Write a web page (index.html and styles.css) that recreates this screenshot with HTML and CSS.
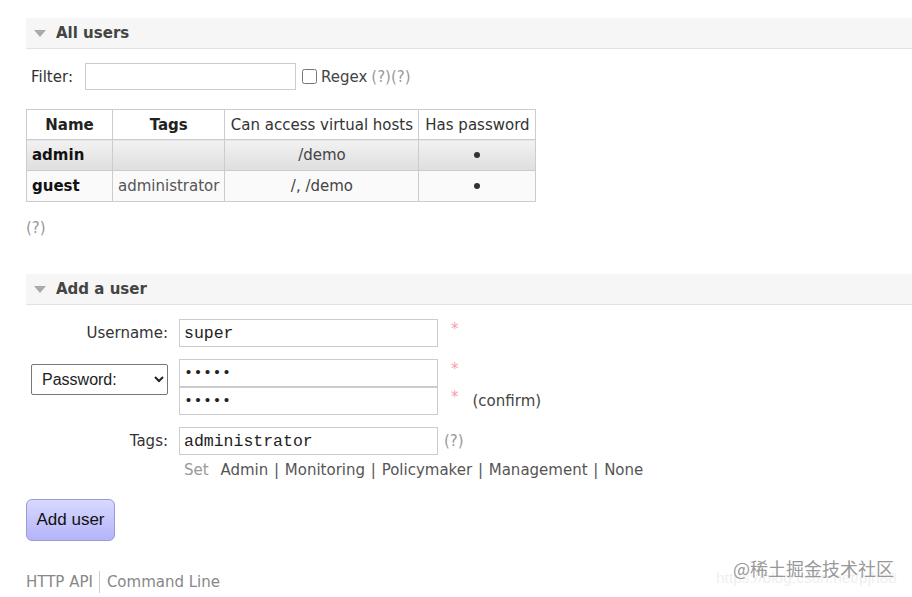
FILE: index.html
```html
<html lang="en">
<head>
    <meta charset="UTF-8">
    <title>Users</title>
    <link rel="stylesheet" href="styles.css">
</head>
<body>
    <div class="main-container">
        <div class="section">
            <h2 class="section-title"><span class="arrow"></span>All users</h2>
            <div class="filter-row">
                <label class="filter-label">Filter:</label>
                <input type="text" class="filter-input">
                <label class="regex-label"><input type="checkbox" class="regex-box">Regex</label>
                <span class="help">(?)(?)</span>
            </div>
            <table class="users-table">
                <thead>
                    <tr>
                        <th class="col-name">Name</th>
                        <th class="col-tags">Tags</th>
                        <th class="col-vhosts plain">Can access virtual hosts</th>
                        <th class="col-pass plain">Has password</th>
                    </tr>
                </thead>
                <tbody>
                    <tr class="row-alt">
                        <td class="user-name">admin</td>
                        <td></td>
                        <td class="center">/demo</td>
                        <td class="center"><span class="dot"></span></td>
                    </tr>
                    <tr class="row-plain">
                        <td class="user-name">guest</td>
                        <td class="tags-cell">administrator</td>
                        <td class="center">/, /demo</td>
                        <td class="center"><span class="dot"></span></td>
                    </tr>
                </tbody>
            </table>
            <p class="help table-help">(?)</p>
        </div>

        <div class="section">
            <h2 class="section-title"><span class="arrow"></span>Add a user</h2>
            <div class="user-form">
                <div class="form-row">
                    <label class="form-label">Username:</label>
                    <input type="text" class="text-input" value="super">
                    <span class="mand">*</span>
                </div>
                <div class="form-row top">
                    <div class="form-label">
                        <select class="pass-select">
                            <option>Password:</option>
                        </select>
                    </div>
                    <div class="pass-stack">
                        <div class="pass-line">
                            <input type="password" class="text-input" value="super">
                            <span class="mand">*</span>
                        </div>
                        <div class="pass-line">
                            <input type="password" class="text-input" value="super">
                            <span class="mand">*</span>
                            <span class="confirm">(confirm)</span>
                        </div>
                    </div>
                </div>
                <div class="form-row">
                    <label class="form-label">Tags:</label>
                    <input type="text" class="text-input" value="administrator">
                    <span class="help tags-help">(?)</span>
                </div>
                <div class="form-row set-row">
                    <span class="form-label"></span>
                    <div class="tag-links">
                        <span class="set">Set</span>
                        <span>Admin</span> | <span>Monitoring</span> | <span>Policymaker</span> | <span>Management</span> | <span>None</span>
                    </div>
                </div>
            </div>
            <button type="button" class="add-button">Add user</button>
        </div>

        <div class="footer">
            <span class="footer-link">HTTP API</span>
            <span class="footer-link last">Command Line</span>
        </div>
    </div>

    <div class="watermark">
        <span class="wm-url">https://blog.csdn.net/pjh88</span>
        <span class="wm-text">@稀土掘金技术社区</span>
    </div>
</body>
</html>
```

FILE: styles.css
```css
html {
    background-color: white;
}

body {
    margin: 0;
    font-family: "DejaVu Sans", Verdana, sans-serif;
    font-size: 15px;
    color: #444;
    overflow: hidden;
}

.main-container {
    padding: 18px 0 0 26px;
}

.section-title {
    display: flex;
    align-items: center;
    height: 30px;
    margin: 0;
    padding-left: 8px;
    background-color: #f6f6f6;
    border-bottom: 1px solid #e2e2e2;
    font-size: 15px;
    font-weight: bold;
    color: #444;
}

.arrow {
    width: 0;
    height: 0;
    margin-right: 10px;
    border-left: 6px solid transparent;
    border-right: 6px solid transparent;
    border-top: 7px solid #aaa;
}

.filter-row {
    display: flex;
    align-items: center;
    margin-top: 14px;
    height: 27px;
}

.filter-label {
    margin-left: 5px;
    margin-right: 12px;
    color: #333;
}

.filter-input {
    width: 211px;
    height: 27px;
    box-sizing: border-box;
    border: 1px solid #ccc;
    margin: 0 5px 0 0;
}

.regex-label {
    display: flex;
    align-items: center;
    color: #444;
}

.regex-box {
    width: 15px;
    height: 15px;
    margin: 0 4px 0 1px;
}

.help {
    color: #999;
    margin-left: 4px;
}

.users-table {
    margin-top: 19px;
    border-collapse: collapse;
    table-layout: fixed;
    font-size: 15px;
    color: #444;
}

.users-table th,
.users-table td {
    border: 1px solid #ccc;
    height: 30px;
    padding: 0 5px;
    white-space: nowrap;
    overflow: hidden;
}

.users-table td {
    height: 31px;
}

.users-table th {
    font-weight: bold;
    color: #222;
}

.users-table th.plain {
    font-weight: normal;
    color: #333;
}

.col-name {
    width: 75px;
}

.col-tags {
    width: 101px;
}

.col-vhosts {
    width: 183px;
}

.col-pass {
    width: 106px;
}

.row-alt td {
    background: linear-gradient(#f2f2f2, #dedede);
}

.row-plain td {
    background-color: #fafafa;
}

.user-name {
    font-weight: bold;
    color: #111;
}

.center {
    text-align: center;
}

.dot {
    display: inline-block;
    width: 6px;
    height: 6px;
    border-radius: 50%;
    background-color: #333;
    vertical-align: middle;
}

.tags-cell {
    color: #555;
}

.table-help {
    margin: 17px 0 0 0;
    line-height: 18px;
}

.section + .section {
    margin-top: 37px;
}

.user-form {
    display: flex;
    flex-direction: column;
    gap: 12px;
    margin-top: 14px;
}

.form-row {
    display: flex;
    align-items: center;
}

.form-row.top {
    align-items: flex-start;
}

.form-label {
    display: flex;
    justify-content: flex-end;
    width: 142px;
    margin-right: 11px;
    color: #333;
}

.text-input {
    width: 259px;
    height: 28px;
    box-sizing: border-box;
    margin: 0;
    padding: 0 4px;
    border: 1px solid #ccc;
    font-family: "Liberation Mono", "Courier New", monospace;
    font-size: 16.5px;
    color: #222;
}

input[type="password"] {
    font-size: 15px;
    letter-spacing: 0.5px;
}

.pass-select {
    width: 137px;
    height: 31px;
    margin-top: 5px;
    padding-left: 6px;
    border: 1px solid #777;
    border-radius: 2px;
    background-color: white;
    font-family: "Liberation Sans", Arial, sans-serif;
    font-size: 16px;
    color: #222;
}

.pass-stack {
    display: flex;
    flex-direction: column;
}

.pass-line {
    display: flex;
    align-items: center;
}

.mand {
    margin-left: 13px;
    margin-top: -8px;
    color: #f5a0a8;
    font-size: 15px;
}

.confirm {
    margin-left: 14px;
    color: #444;
}

.tags-help {
    margin-left: 6px;
}

.set-row {
    margin-top: -6px;
    line-height: 18px;
}

.tag-links {
    margin-left: 5px;
    color: #555;
    word-spacing: 1px;
}

.set {
    color: #999;
    margin-right: 6px;
}

.add-button {
    display: block;
    margin-top: 20px;
    width: 89px;
    height: 42px;
    border: 1px solid #9a9ad8;
    border-radius: 6px;
    background: linear-gradient(#d8d8ff, #b4b4fa);
    font-family: "Liberation Sans", Arial, sans-serif;
    font-size: 17px;
    color: #111;
}

.footer {
    display: flex;
    align-items: center;
    margin-top: 30px;
    color: #888;
}

.footer-link {
    padding-right: 6px;
    border-right: 1px solid #ccc;
    line-height: 22px;
}

.footer-link.last {
    padding-left: 7px;
    border-right: none;
}

.watermark {
    position: absolute;
    left: 716px;
    top: 555px;
    width: 192px;
    height: 36px;
}

.wm-url {
    position: absolute;
    left: 0;
    top: 14px;
    font-family: "Liberation Sans", Arial, sans-serif;
    font-size: 15.5px;
    color: #efefef;
    white-space: nowrap;
}

.wm-text {
    position: absolute;
    left: 17px;
    top: 0;
    font-family: "Noto Sans CJK SC", sans-serif;
    font-size: 18px;
    color: #999;
    white-space: nowrap;
}
```
